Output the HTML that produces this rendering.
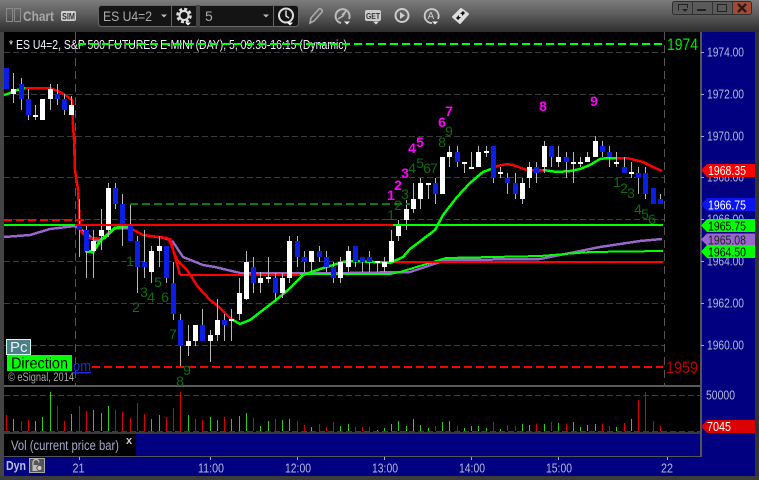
<!DOCTYPE html>
<html><head><meta charset="utf-8"><style>
html,body{margin:0;padding:0;background:#3a3a3a}
svg{display:block}
text{font-family:"Liberation Sans",sans-serif}
</style></head><body>
<svg width="759" height="480" viewBox="0 0 759 480" xmlns="http://www.w3.org/2000/svg">
<defs><linearGradient id="tb" x1="0" y1="0" x2="0" y2="1"><stop offset="0" stop-color="#7c7c7c"/><stop offset=".45" stop-color="#5c5c5c"/><stop offset="1" stop-color="#2e2e2e"/></linearGradient></defs>
<rect width="759" height="480" fill="#444"/>
<rect width="759" height="32" fill="url(#tb)"/>
<rect x="755" y="32" width="4" height="448" fill="#333"/>
<rect x="0" y="476" width="759" height="4" fill="#3c3c3c"/>

<!-- title bar -->
<g fill="none" stroke="#8a8a8a"><rect x="6.500" y="8.500" width="6" height="13"/><rect x="14.500" y="8.500" width="6" height="13"/></g>
<text x="23" y="21" font-size="14" font-weight="bold" fill="#a8a8a8" textLength="31" lengthAdjust="spacingAndGlyphs">Chart</text>
<rect x="61" y="11" width="15" height="10" rx="2" fill="#d0d0d0"/>
<text x="62" y="19.500" font-size="9" font-weight="bold" fill="#333" textLength="13" lengthAdjust="spacingAndGlyphs">SIM</text>
<rect x="98.500" y="5.500" width="200" height="21" rx="3" fill="#141414" stroke="#666"/>
<rect x="196" y="5" width="4" height="22" fill="#444"/>
<path d="M171.500 6V26M273.500 6V26" stroke="#666"/>
<text x="103" y="21" font-size="14" fill="#aaa" textLength="49" lengthAdjust="spacingAndGlyphs">ES U4=2</text>
<path d="M161 14.500h6l-3 3z" fill="#bbb"/>
<text x="205" y="21" font-size="14" fill="#aaa">5</text>
<path d="M263 14.500h6l-3 3z" fill="#bbb"/>
<!-- gear -->
<g fill="none" stroke="#ddd"><circle cx="184" cy="15.500" r="6.500" stroke-width="2.600" stroke-dasharray="3 2.100"/><circle cx="184" cy="15.500" r="4.500" stroke-width="2"/></g>
<path d="M185 22.500h6l-3 3z" fill="#fff"/>
<!-- clock -->
<circle cx="286" cy="15.500" r="7" fill="none" stroke="#ddd" stroke-width="2"/>
<path d="M286 10.500v5.500l3 2" fill="none" stroke="#ddd" stroke-width="1.500"/>
<path d="M287 22.500h6l-3 3z" fill="#fff"/>
<!-- pencil -->
<path d="M310 23l1-5 8-9c1.500-1 4 1 3 3l-8 9z" fill="none" stroke="#aaa" stroke-width="1.600"/>
<!-- arc clock -->
<path d="M341 23a7 7 0 1 1 8-4" fill="none" stroke="#bbb" stroke-width="2"/>
<path d="M338 19l5-3 3-5-4 4" fill="none" stroke="#bbb" stroke-width="1.500"/>
<path d="M344 21.500h6l-3 3z" fill="#eee"/>
<!-- GET -->
<rect x="365" y="10" width="16" height="11" rx="2" fill="#ccc"/>
<text x="366" y="19" font-size="8" font-weight="bold" fill="#333" textLength="14" lengthAdjust="spacingAndGlyphs">GET</text>
<path d="M373 21.500h6l-3 3z" fill="#ddd"/>
<!-- play -->
<circle cx="402" cy="15.500" r="6.500" fill="none" stroke="#ccc" stroke-width="2"/>
<path d="M400 12v7l5-3.500z" fill="#ccc"/>
<!-- A -->
<path d="M432 23a7 7 0 1 1 6-4" fill="none" stroke="#ccc" stroke-width="1.800"/>
<text x="427.500" y="19" font-size="10" fill="#ccc">A</text>
<path d="M432 21.500h6l-3 3z" fill="#eee"/>
<!-- diamond -->
<path d="M453 17l8-8 7 5-8 9z" fill="#ddd" stroke="#ddd" stroke-width="2" stroke-linejoin="round"/>
<path d="M456 18l3-3v2h2l-3 3zM465 13l-3 3v-2h-2l3-3z" fill="#111"/>
<!-- window buttons -->
<rect x="672.500" y="1.500" width="79" height="13" rx="2" fill="#5a5a5a" stroke="#2e2e2e"/>
<path d="M732 2h18a1 1 0 0 1 1 1v10a1 1 0 0 1-1 1h-18z" fill="#a34a36"/>
<path d="M692.500 2V14M712.500 2V14M732.500 2V14" stroke="#333"/>
<path d="M678.500 10.500V4.500H687.500V8" fill="none" stroke="#222"/><path d="M682 9h6l-3 3z" fill="#222"/>
<rect x="697" y="9" width="9" height="2" fill="#222"/>
<rect x="717.500" y="4.500" width="9" height="7" fill="none" stroke="#222"/>
<path d="M738 4l8 8M746 4l-8 8" stroke="#2a1a14" stroke-width="2.400"/>

<!-- chart area -->
<rect x="4" y="32" width="696" height="353" fill="#000"/>
<rect x="4" y="387" width="696" height="45" fill="#000"/>
<rect x="700" y="32" width="2" height="425" fill="#555"/>
<rect x="702" y="32" width="53" height="444" fill="#000080"/>
<rect x="136" y="434" width="564" height="22" fill="#000080"/>
<rect x="4" y="432" width="696" height="2" fill="#3a3a3a"/>
<rect x="4" y="434" width="132" height="22" fill="#000"/>
<rect x="4" y="456" width="698" height="1" fill="#555"/>
<rect x="4" y="457" width="751" height="19" fill="#000080"/>
<rect x="4" y="385" width="696" height="2" fill="#5a5a5a"/>

<g shape-rendering="crispEdges">
<!-- grid -->
<g stroke="#3c3c3c" fill="none" stroke-dasharray="6 3">
<path d="M4 52.500H664M4 94.500H664M4 136.500H664M4 177.500H664M4 219.500H664M4 261.500H664M4 303.500H664M4 345.500H664M4 395.500H700M4 431.500H700"/>
<path d="M75.500 32V385M664.500 32V385" stroke="#555" stroke-dasharray="8 5"/>
</g>

<!-- purple -->
<polyline fill="none" stroke="#9966cc" stroke-width="2.500" points="4,237 30,235 50,229 75,226 85,232 95,241 105,238 115,228 130,228 143,235 165,238 173,242 183,257 203,265 215,267 240,273 300,273 350,273 410,272 440,262 446,260 540,259 600,247 640,241 662,239"/>
<!-- green horizontal -->
<polyline fill="none" stroke="#00ff00" stroke-width="2" points="300,274 390,274 400,272 446,258 540,256 590,252 663,251"/>
<path d="M365 262H663" stroke="#ff0000" stroke-width="2"/>
<path d="M180 275H300" stroke="#ff0000" stroke-width="2"/>
<polyline fill="none" stroke="#ff0000" stroke-width="2.500" points="170,238 180,275"/>
<!-- MA -->
<polyline fill="none" stroke="#00ff00" stroke-width="2.500" points="4,95 10,93 17,90 25,88"/>
<polyline fill="none" stroke="#ff0000" stroke-width="2.500" points="25,88 50,88 55,90 62,93 68,97 72,100 73,125 74,140 75,170 78,190 79,210 80,230 87,238 100,238"/>
<polyline fill="none" stroke="#00ff00" stroke-width="3" points="85,251 93,252 100,241 115,228 130,226"/>
<polyline fill="none" stroke="#ff0000" stroke-width="2.500" points="130,228 143,235 167,238 170,242 177,260 187,270 198,287 210,300 220,308 230,318 233,320"/>
<polyline fill="none" stroke="#00ff00" stroke-width="2.500" points="233,320 240,324 250,320 276,300 288,290 303,275 320,269 343,262 357,261 390,263 403,257 410,249 435,230 443,215 457,197 470,183 483,172 491,169"/>
<polyline fill="none" stroke="#ff0000" stroke-width="2.500" points="491,169 497,166 507,164 513,165 527,170 543,170"/>
<polyline fill="none" stroke="#00ff00" stroke-width="2.500" points="543,170 557,172 570,171 580,169 590,165 600,159 607,158 617,158"/>
<polyline fill="none" stroke="#ff0000" stroke-width="2.500" points="617,158 627,158 643,162 653,167 662,171"/>

<!-- wicks -->
<path fill="none" stroke="#b8b8b8" d="M13.500 73V103M21.500 78V110M28.500 89V120M35.500 105V120M50.500 84V110M57.500 84V105M64.500 94V115M71.500 96V115M79.500 199V257M86.500 225V278M93.500 230V278M101.500 209V250M108.500 183V237M115.500 183V209M122.500 194V246M130.500 204V241M137.500 236V293M144.500 230V278M151.500 246V283M159.500 236V267M166.500 246V283M173.500 262V320M180.500 314V367M188.500 325V356M195.500 325V346M202.500 309V341M210.500 330V362M217.500 299V341M224.500 314V341M231.500 309V341M239.500 278V320M246.500 251V300M253.500 257V293M260.500 272V293M268.500 257V283M275.500 273V300M282.500 273V298M289.500 236V283M297.500 236V267M304.500 251V272M311.500 251V272M319.500 246V262M326.500 251V272M333.500 262V283M340.500 257V283M348.500 246V272M355.500 246V267M362.500 257V272M369.500 251V272M377.500 261V272M384.500 257V272M391.500 230V262M398.500 220V241M406.500 200V230M413.500 183V213M420.500 178V209M428.500 183V199M435.500 178V204M449.500 146V167M457.500 146V167M464.500 162V173M471.500 152V169M478.500 146V167M486.500 146V157M493.500 146V183M500.500 167V178M507.500 173V194M515.500 173V199M522.500 178V204M529.500 162V188M536.500 162V183M544.500 141V173M551.500 146V167M558.500 146V167M566.500 152V178M573.500 152V183M580.500 157V167M587.500 152V162M595.500 136V157M602.500 141V157M609.500 146V167M616.500 152V167M624.500 157V173M631.500 162V178M638.500 167V194M645.500 167V199M660.500 194V204"/>
<!-- blue bodies -->
<path fill="none" stroke="#0a1ee6" stroke-width="5" d="M6.500 68V89M21.500 84V99M28.500 99V115M57.500 94V99M64.500 99V110M79.500 225V230M86.500 230V251M115.500 188V204M122.500 204V225M130.500 225V241M137.500 241V267M144.500 262V267M166.500 246V278M173.500 283V314M180.500 320V346M202.500 325V341M224.500 320V325M253.500 267V283M275.500 278V293M297.500 241V257M304.500 257V262M319.500 251V257M326.500 257V267M333.500 267V278M355.500 246V262M362.500 257V262M369.500 257V262M435.500 183V194M457.500 152V162M493.500 146V178M507.500 178V183M515.500 183V194M536.500 167V173M551.500 146V157M566.500 157V162M602.500 146V152M609.500 152V157M624.500 167V173M638.500 173V178M645.500 173V194M653.500 188V204M660.500 199V204"/>
<!-- white bodies -->
<path fill="none" stroke="#ffffff" stroke-width="5" d="M13.500 89V94M35.500 115V117M42.500 99V120M50.500 89V99M71.500 105V115M93.500 241V251M101.500 230V236M108.500 188V230M151.500 251V272M159.500 246V251M188.500 341V346M195.500 325V341M210.500 335V341M217.500 320V335M231.500 319V321M239.500 293V314M246.500 262V299M260.500 278V283M268.500 277V279M282.500 278V293M289.500 241V278M311.500 251V262M340.500 262V278M348.500 251V267M377.500 261V263M384.500 262V267M391.500 241V262M398.500 225V236M406.500 209V220M413.500 199V209M420.500 183V199M428.500 183V185M442.500 157V194M449.500 152V157M464.500 162V164M471.500 167V169M478.500 152V167M486.500 151V153M500.500 172V174M522.500 183V199M529.500 167V178M544.500 146V167M558.500 157V162M573.500 162V164M580.500 162V164M587.500 157V162M595.500 141V157M616.500 162V164M631.500 172V174"/>

<!-- horizontal lines -->
<path d="M92 367H663" stroke="#ff0000" stroke-width="2" stroke-dasharray="8 4"/>
<path d="M4 220H84" stroke="#ff0000" stroke-width="2" stroke-dasharray="8 4"/>
<path d="M130 204H410" stroke="#0a7a0a" stroke-width="2" stroke-dasharray="8 4"/>
<path d="M4 225H75M393 225H663" stroke="#00ff00" stroke-width="2"/>
<path d="M75 225H393" stroke="#ff0000" stroke-width="2"/>

<!-- volume -->
<path fill="none" stroke="#dd0000" d="M6.500 415V431M21.500 421V431M28.500 420V431M57.500 406V431M64.500 421V431M79.500 406V431M86.500 411V431M115.500 410V431M122.500 412V431M130.500 418V431M137.500 403V431M144.500 414V431M166.500 417V431M173.500 408V431M180.500 392V431M195.500 419V431M202.500 420V431M224.500 417V431M253.500 418V431M275.500 419V431M297.500 421V431M304.500 425V431M319.500 424V431M326.500 427V431M333.500 422V431M355.500 427V431M362.500 427V431M369.500 427V431M435.500 426V431M457.500 426V431M493.500 422V431M507.500 425V431M515.500 426V431M536.500 424V431M551.500 422V431M566.500 424V431M602.500 424V431M609.500 426V431M624.500 423V431M638.500 400V431M645.500 392V431M653.500 421V431M660.500 426V431"/>
<path fill="none" stroke="#33cc11" d="M13.500 419V431M35.500 421V431M42.500 417V431M50.500 392V431M71.500 414V431M93.500 410V431M101.500 413V431M108.500 406V431M151.500 419V431M159.500 415V431M188.500 415V431M210.500 417V431M217.500 420V431M231.500 419V431M239.500 416V431M246.500 413V431M260.500 426V431M268.500 421V431M282.500 420V431M289.500 419V431M311.500 427V431M340.500 426V431M348.500 424V431M377.500 430V431M384.500 428V431M391.500 424V431M398.500 421V431M406.500 426V431M413.500 419V431M420.500 425V431M428.500 428V431M442.500 422V431M449.500 421V431M464.500 428V431M471.500 426V431M478.500 426V431M486.500 428V431M500.500 429V431M522.500 424V431M529.500 425V431M544.500 424V431M558.500 423V431M573.500 422V431M580.500 427V431M587.500 425V431M595.500 424V431M616.500 427V431M631.500 419V431"/>
<path d="M701 52.500h3M701 94.500h3M701 136.500h3M701 177.500h3M701 219.500h3M701 261.500h3M701 303.500h3M701 345.500h3M79.500 457v3M210.500 457v3M297.500 457v3M384.500 457v3M471.500 457v3M558.500 457v3M667.500 457v3" stroke="#aab"/>
</g>

<!-- title text -->
<text x="9" y="49" font-size="12.500" fill="#f0f4ff" textLength="338" lengthAdjust="spacingAndGlyphs">* ES U4=2, S&amp;P 500 FUTURES E-MINI (DAY), 5, 09:30-16:15 (Dynamic)</text>
<path d="M78 44H663" stroke="#00ff00" stroke-width="2" stroke-dasharray="8 4" shape-rendering="crispEdges"/>
<text x="667" y="50" font-size="17" fill="#00e800" textLength="31" lengthAdjust="spacingAndGlyphs">1974</text>
<text x="666" y="373" font-size="17" fill="#b80000" textLength="32" lengthAdjust="spacingAndGlyphs">1959</text>

<!-- sequence digits -->
<g font-size="14" fill="#0b6e0b" text-anchor="middle">
<text x="130" y="266">1</text><text x="136" y="312">2</text><text x="144" y="297">3</text><text x="151" y="302">4</text><text x="158" y="287">5</text><text x="165" y="302">6</text><text x="173" y="339">7</text><text x="180" y="386">8</text><text x="187" y="375">9</text>
<text x="391" y="220">1</text><text x="398" y="210">2</text><text x="405" y="199">3</text><text x="412" y="173">4</text><text x="420" y="168">5</text><text x="427" y="173">6</text><text x="434" y="173">7</text><text x="442" y="147">8</text><text x="449" y="136">9</text>
<text x="617" y="187">1</text><text x="624" y="193">2</text><text x="631" y="198">3</text><text x="638" y="214">4</text><text x="645" y="219">5</text><text x="652" y="224">6</text>
</g>
<g font-size="14" font-weight="bold" fill="#ff00ff" text-anchor="middle">
<text x="391" y="200">1</text><text x="398" y="190">2</text><text x="405" y="178">3</text><text x="412" y="153">4</text><text x="420" y="147">5</text><text x="442" y="127">6</text><text x="449" y="116">7</text><text x="543" y="111">8</text><text x="594" y="106">9</text>
</g>

<!-- price axis -->
<g font-size="12.500" fill="#b4b8dc">
<text x="707" y="56.500" textLength="37" lengthAdjust="spacingAndGlyphs">1974.00</text><text x="707" y="98.500" textLength="37" lengthAdjust="spacingAndGlyphs">1972.00</text><text x="707" y="140.500" textLength="37" lengthAdjust="spacingAndGlyphs">1970.00</text><text x="707" y="181.500" textLength="37" lengthAdjust="spacingAndGlyphs">1968.00</text><text x="707" y="223.500" textLength="37" lengthAdjust="spacingAndGlyphs">1966.00</text><text x="707" y="265.500" textLength="37" lengthAdjust="spacingAndGlyphs">1964.00</text><text x="707" y="307.500" textLength="37" lengthAdjust="spacingAndGlyphs">1962.00</text><text x="707" y="349.500" textLength="37" lengthAdjust="spacingAndGlyphs">1960.00</text>
<text x="706" y="399.500" textLength="29" lengthAdjust="spacingAndGlyphs">50000</text>
</g>
<path d="M701 170l6-6h48v13h-48z" fill="#ff0000"/>
<path d="M701 204.500l6-6.500h48v13h-48z" fill="#0a14ee"/>
<path d="M701 225.500l6-6.500h48v13h-48z" fill="#00ff00"/>
<path d="M701 239.500l6-6h48v12h-48z" fill="#9966cc"/>
<path d="M701 251.500l6-6.500h48v13h-48z" fill="#00ff00"/>
<path d="M701 426.500l6-6.500h48v13h-48z" fill="#dd0000"/>
<g font-size="13">
<text x="708" y="175" fill="#fff" textLength="38" lengthAdjust="spacingAndGlyphs">1968.35</text>
<text x="708" y="209.500" fill="#fff" textLength="38" lengthAdjust="spacingAndGlyphs">1966.75</text>
<text x="708" y="230.500" fill="#000" textLength="38" lengthAdjust="spacingAndGlyphs">1965.75</text>
<text x="708" y="244.500" fill="#222" textLength="38" lengthAdjust="spacingAndGlyphs">1965.08</text>
<text x="708" y="256.500" fill="#000" textLength="38" lengthAdjust="spacingAndGlyphs">1964.50</text>
<text x="707" y="431" fill="#fff" textLength="24" lengthAdjust="spacingAndGlyphs">7045</text>
</g>

<!-- overlays -->
<rect x="6.500" y="339.500" width="24" height="15" fill="#4c7f87" stroke="#cfe"/>
<text x="10" y="352" font-size="15" fill="#e8f4f4">Pc</text>
<rect x="7" y="355" width="65" height="16" fill="#00ff00"/>
<text x="11" y="368.500" font-size="16" fill="#000" textLength="57" lengthAdjust="spacingAndGlyphs">Direction</text>
<text x="73" y="371" font-size="15" fill="#1a2ce0" text-decoration="underline" textLength="18" lengthAdjust="spacingAndGlyphs">om</text>
<text x="8" y="381" font-size="11.500" fill="#a8a8a8" textLength="66" lengthAdjust="spacingAndGlyphs">© eSignal, 2014</text>

<!-- bottom -->
<text x="11" y="450" font-size="13.500" fill="#a4aac8" textLength="108" lengthAdjust="spacingAndGlyphs">Vol (current price bar)</text>
<text x="126" y="444" font-size="11" font-weight="bold" fill="#ccc">x</text>
<text x="6" y="470" font-size="13" font-weight="bold" fill="#b8c0e0" textLength="20" lengthAdjust="spacingAndGlyphs">Dyn</text>
<rect x="29.500" y="458.500" width="15" height="14" fill="#555" stroke="#aaa"/>
<path d="M33 465v-2.500a3 3 0 0 1 6 0" fill="none" stroke="#ccc" stroke-width="1.200"/>
<rect x="32.500" y="465" width="7" height="6" fill="#bbb"/>
<circle cx="39.500" cy="468" r="2.600" fill="#ccc" stroke="#555"/>
<g font-size="12.500" fill="#b4b8dc" text-anchor="middle">
<text x="78.500" y="472.500" textLength="12" lengthAdjust="spacingAndGlyphs">21</text><text x="211" y="472.500" textLength="26" lengthAdjust="spacingAndGlyphs">11:00</text><text x="298" y="472.500" textLength="26" lengthAdjust="spacingAndGlyphs">12:00</text><text x="385" y="472.500" textLength="26" lengthAdjust="spacingAndGlyphs">13:00</text><text x="472" y="472.500" textLength="26" lengthAdjust="spacingAndGlyphs">14:00</text><text x="559" y="472.500" textLength="26" lengthAdjust="spacingAndGlyphs">15:00</text><text x="667" y="472.500" textLength="12" lengthAdjust="spacingAndGlyphs">22</text>
</g>
</svg>
</body></html>
